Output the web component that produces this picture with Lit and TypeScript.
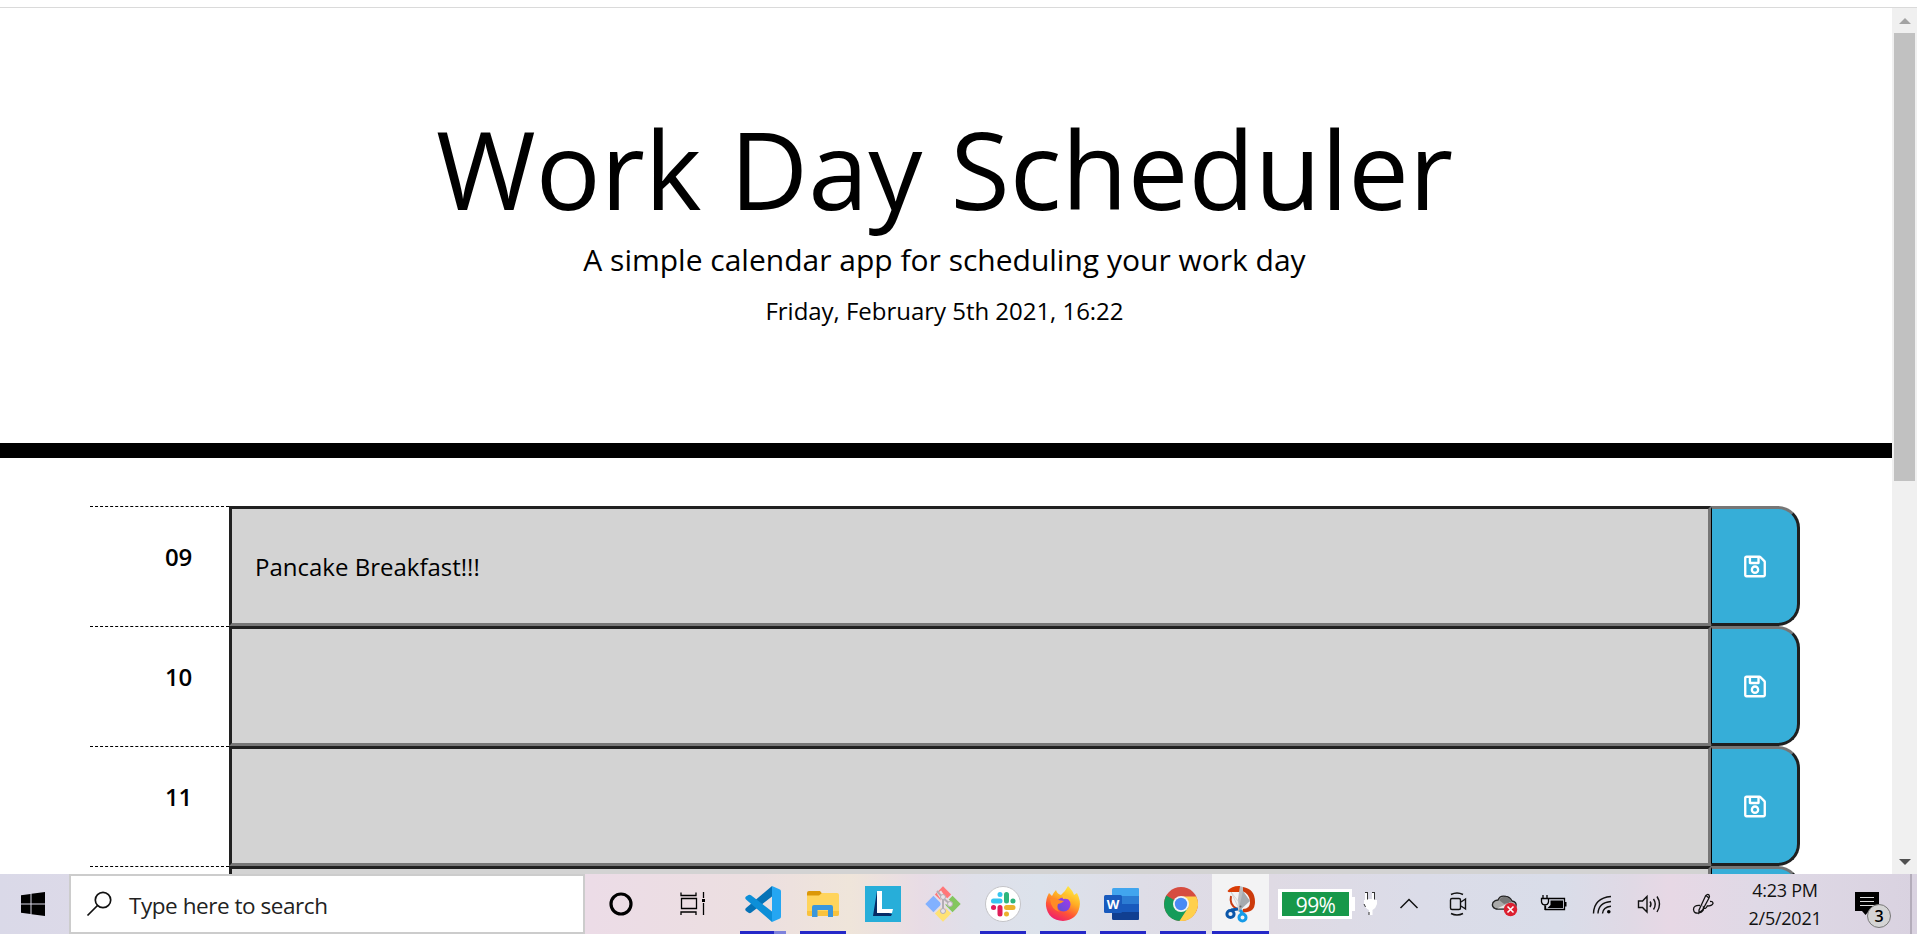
import { LitElement, html, svg, css } from "lit";
import { customElement, property } from "lit/decorators.js";

@customElement("time-block")
class TimeBlock extends LitElement {
  @property() hour = "";
  @property() text = "";
  static styles = css`
    :host { display: flex; height: 120px; box-sizing: border-box; }
    .hour { width: 139px; box-sizing: border-box; border-top: 1px dashed #000; padding: 32px 37px 0 0; text-align: right; font-size: 24px; line-height: 36px; font-weight: 600; letter-spacing: -0.2px; }
    .desc { flex: 1; box-sizing: border-box; background: #d3d3d3; border: 3px solid; border-color: #202020 #767676 #767676 #202020; display: flex; align-items: center; padding: 1px 0 0 23px; font-size: 24px; letter-spacing: 0; }
    .save { width: 89px; box-sizing: border-box; padding: 0; margin: 0; background: #36aed8; border-style: solid; border-width: 3px 3px 3px 1px; border-color: #767676 #202020 #202020 #000; border-radius: 0 22px 22px 0; display: flex; align-items: center; justify-content: center; }
    svg { width: 22px; height: 25px; display: block; }
  `;
  render() {
    return html`<div class="hour">${this.hour}</div>
      <div class="desc">${this.text}</div>
      <button class="save" aria-label="Save">
        <svg viewBox="0 0 448 512" fill="#fff"><path d="M433.941 129.941l-83.882-83.882A48 48 0 0 0 316.118 32H48C21.49 32 0 53.49 0 80v352c0 26.51 21.49 48 48 48h352c26.51 0 48-21.49 48-48V163.882a48 48 0 0 0-14.059-33.941zM272 80v80H144V80h128zm122 352H54a6 6 0 0 1-6-6V86a6 6 0 0 1 6-6h42v104c0 13.255 10.745 24 24 24h176c13.255 0 24-10.745 24-24V83.882l78.243 78.243a6 6 0 0 1 1.757 4.243V426a6 6 0 0 1-6 6zM224 232c-48.523 0-88 39.477-88 88s39.477 88 88 88 88-39.477 88-88-39.477-88-88-88zm0 128c-22.056 0-40-17.944-40-40s17.944-40 40-40 40 17.944 40 40-17.944 40-40 40z"/></svg>
      </button>`;
  }
}

/* Taskbar glyphs. Every one is drawn on a canvas 60px tall, the height of the bar. */
const start = svg`<path d="M21 21.2L30.500 20V29.500H21ZM31.500 19.800L45 18V29.500H31.500ZM21 30.500H30.500V40L21 38.800ZM31.500 30.500H45V42L31.500 40.200Z"/>`;
const lens = svg`<g fill="none" stroke="#111" stroke-width="1.700"><circle cx="32" cy="26" r="7.700"/><path d="M26.500 31.500L16.500 41.500"/></g>`;
const cortana = svg`<circle cx="36" cy="30" r="10" fill="none" stroke="#000" stroke-width="3.200"/>`;
const taskView = svg`<g fill="none" stroke="#000" stroke-width="1.300"><path d="M9 18.500V21.500H24V18.500M9 41V38H24V41M9.500 24.500H24.500V34.500H9.500ZM31.500 18V24M31.500 29V41"/></g><path d="M30 25h3v3h-3z"/>`;
const vscode = svg`<path d="M39 12V22.500L18 38.700Q17 39.500 15.500 38.800L13 37Q11.500 35.500 13 34Z" fill="#0672b6"/><path d="M13 25.500Q11.500 24 13 22.500L15.500 21Q17 20.500 18 21.300L39 37.500V48Z" fill="#0d8fd8"/><path d="M39 12L47 15.600Q48 16 48 17.500V42.500Q48 44 47 44.400L39 48Z" fill="#25a6f2"/>`;
const explorer = svg`<path d="M14 19Q14 17 16 17H27L29 19.500L27 24H14Z" fill="#dc9808"/><path d="M14 21.500H26L29 19H44Q46 19 46 21V40Q46 42 44 42H16Q14 42 14 40Z" fill="#ffd45c"/><path d="M14 37H46V40Q46 42 44 42H16Q14 42 14 40Z" fill="#f9c23d"/><path d="M19 43V33Q19 31 21 31H38Q40 31 40 33V43H35V36H24.500V43Z" fill="#3b97dc"/>`;
const letterL = svg`<path d="M12 12H48V48H12Z" fill="#27aed9"/><path d="M24 17L20 42H38L39 40L26 36Z" fill="#062b66"/><path d="M24 17H29V35H40L39 39H24Z" fill="#fff"/>`;
const git = svg`<g transform="translate(30 30) rotate(45)"><path d="M-12.500-12.500H-1V-1H-12.500Z" fill="#ff7779"/><path d="M1-12.500H12.500V-1H1Z" fill="#84c65f"/><path d="M-12.500 1H-1V12.500H-12.500Z" fill="#82b1ff"/><path d="M1 1H12.500V12.500H1Z" fill="#ffe274"/></g><path d="M26 18L30 24V37M30 24L38 31" fill="none" stroke="#eadfe6" stroke-width="5"/><path d="M24 17L30 24V37M30 24L37 30" fill="none" stroke="#b3aeb3" stroke-width="2"/><g fill="#e9e2e8" stroke="#b3aeb3"><circle cx="30" cy="23" r="2.500"/><circle cx="37" cy="30" r="2.500"/><circle cx="30" cy="37" r="2.500"/></g>`;
const slack = svg`<circle cx="30" cy="30" r="17.500" fill="#fff" stroke="#c4c4c8"/><g stroke-width="5" stroke-linecap="round"><path d="M27 20.500V20.400M20.500 27H27" stroke="#36c5f0"/><path d="M33.500 20.500V27M40 27H39.900" stroke="#2eb67d"/><path d="M33.500 40V39.900M33.500 33.500H40" stroke="#ecb22e"/><path d="M27 33.500V40M20.500 33.500H20.600" stroke="#e01e5a"/></g>`;
const firefox = svg`<defs><linearGradient id="ff" x1=".8" y1="0" x2=".3" y2="1"><stop offset="0" stop-color="#fff14a"/><stop offset=".4" stop-color="#ffad23"/><stop offset=".7" stop-color="#ff5436"/><stop offset="1" stop-color="#ed1b72"/></linearGradient><linearGradient id="fp" x1="1" y1="0" x2="0" y2="1"><stop offset="0" stop-color="#a638ed"/><stop offset="1" stop-color="#5b50d2"/></linearGradient></defs><path d="M35 12Q40 17 41 21L44 19Q48 27 46.500 33Q44 46 30 47Q15 46 13 32Q12.500 25 16 19L19 22Q21 18 23 16Q24 20 28 21Q32 18 35 12Z" fill="url(#ff)"/><circle cx="30.500" cy="30.500" r="7" fill="url(#fp)"/><path d="M17 25Q23 23 25.500 26L31 27Q28 30 25 30Q23 35 27 38Q18 36 17 25Z" fill="#ff8b26"/><path d="M29 21Q36 20 38 27Q35 24 30 25Z" fill="#ffbd35"/>`;
const word = svg`<path d="M20.500 14H45Q46 14 46 15V22.500H19V15.500Q19 14 20.500 14Z" fill="#41a5ee"/><path d="M19 22H46V30H19Z" fill="#2b7cd3"/><path d="M19 30H46V38H19Z" fill="#185abd"/><path d="M19 38H46V45Q46 46 45 46H20.500Q19 46 19 44.500Z" fill="#103f91"/><rect x="11" y="21" width="18" height="18" rx="1.500" fill="#185abd"/><text x="20" y="34.500" text-anchor="middle" font-size="13" font-weight="700" fill="#fff">W</text>`;
const chrome = svg`<circle cx="28" cy="30" r="17" fill="#d64c40"/><path d="M13.300 21.500A17 17 0 0 0 26.500 47L35.500 34.500L28 30Z" fill="#159c5a"/><path d="M28 22.500H43.200A17 17 0 0 1 26.500 47L35.500 33Z" fill="#ffd04c"/><circle cx="28" cy="30" r="8" fill="#f3f3f3"/><circle cx="28" cy="30" r="6.200" fill="#4a8af4"/>`;
const snip = svg`<path d="M15.500 17Q20 11.500 28 12V18H18Q16 18.500 15.500 17Z" fill="#d93c05"/><path d="M31 13Q43 15 43 28Q43 39 30 38.500L31 35Q38 35 38 28Q38 20 30 17Z" fill="#cc3a0b"/><path d="M19 22Q17 31 25 35" fill="none" stroke="#c83a10" stroke-width="2"/><path d="M19 18L30 32L28 37Z" fill="#eee" stroke="#bbb" stroke-width=".5"/><path d="M28 12L31 13V33L27 37L26 25Z" fill="#b9bcc0"/><path d="M31 17L38 27L26 38Z" fill="#a5aaae"/><circle cx="28.500" cy="32.500" r="1" fill="#666"/><g fill="none" stroke-width="3"><circle cx="18.500" cy="40" r="3.600" stroke="#0a56a9"/><path d="M19 36L26 35" stroke="#0a56a9"/><circle cx="30.500" cy="43.500" r="3.500" stroke="#159be8"/><path d="M31 40L28 36" stroke="#159be8"/></g>`;
const plug = svg`<path d="M10 19H13V25H17V19H20V26H22V30Q21 34 17.500 36V41H14V36Q10 34 9 30V26H10Z" fill="#fff"/><path d="M12.500 19V25.500M19.500 19V25.500M9 30L10.500 33M14 38V41M10 18.500H13M17 18.500H20" stroke="#333" fill="none"/>`;
const chevron = svg`<path d="M10.500 34L19 25.500L27.500 34" fill="none" stroke="#111" stroke-width="1.500"/>`;
const camera = svg`<g fill="none" stroke="#111" stroke-width="1.400"><rect x="10.500" y="24.500" width="10" height="11" rx="1.500"/><path d="M21 28L25.500 25V35L21 32M11 20.500Q17 17.500 23 20.500M11 39.500Q17 42.500 23 39.500"/></g>`;
const cloud = svg`<path d="M11 35Q6 33 8 28.500Q10 26 13 26Q15 21 21 22.500Q25 23 27 27Q32 28 31 32Q30 35 27 35Z" fill="#aaa" stroke="#222" stroke-width="1.300"/><path d="M14 26Q17 22 22 23Q26 25 27 28L19 30Z" fill="#777"/><path d="M12 34.500L25 28.500L30 34Z" fill="#e6e6e6"/><circle cx="25.500" cy="35.500" r="6.700" fill="#dc2030"/><path d="M22.500 32.500L28.500 38.500M28.500 32.500L22.500 38.500" stroke="#fff" stroke-width="1.600"/>`;
const battery = svg`<path d="M16 24.500H31.500V35.500H12.500V32" fill="none" stroke="#000" stroke-width="1.300"/><path d="M17.500 26.500H30V34H14.500L17.500 31ZM32 28H33.500V32.500H32Z"/><path d="M10 21V24.500M14 21V24.500M8.500 24.500H15.500V28Q15 31 12 31Q9 31 8.500 28ZM12 31V36" fill="none" stroke="#000" stroke-width="1.300"/>`;
const wifi = svg`<g fill="none" stroke="#111" stroke-width="1.400"><path d="M8.500 39.500Q9 24 26 22.500M13 39.500Q13.500 28.500 26 27.500M17.500 39.500Q18 33 26 32.200"/></g><circle cx="23.800" cy="37.800" r="1.800"/>`;
const speaker = svg`<g fill="none" stroke="#111" stroke-width="1.400"><path d="M8.500 27H12.500L17 22.500V38L12.500 33.500H8.500ZM20 27.500Q22 30 20 33M23.500 25Q27 30 23.500 35.500M27 22.500Q32 30 27 38"/></g>`;
const pen = svg`<g fill="none" stroke="#111" stroke-width="1.300"><path d="M14 36L20.500 22Q22.500 19.500 24 21Q25 22.500 24 24L17.500 36L14 39ZM15 31.500Q8.500 31 8.500 35.500Q9 40 14 39Q19 37.500 18.500 33.500Q20.500 36 22.500 31.500M25 27.500Q28 27 28 29.500Q27 32 22 32M21.500 22L24 24"/></g>`;
const notes = svg`<path d="M10 18H34V37H24L20.500 41L17 37H10Z"/><path d="M15 23.500H29M15 27.500H29M15 31.500H29" stroke="#ddd" stroke-width="1"/>`;

@customElement("task-bar")
class TaskBar extends LitElement {
  static styles = css`
    :host { display: flex; height: 60px; overflow: hidden; background: linear-gradient(90deg, #dad9e8 0, #e2dbe8 300px, #ecdce7 590px, #ecdfe0 760px, #efe5da 850px, #e8dce5 920px, #dfe0ea 975px, #dce2eb 1040px, #dedde7 1140px, #dfdae4 1270px, #dbdce8 1420px, #d9dde9 1560px, #e0d9e5 1630px, #e7d8e5 1670px, #dfd9e6 1760px, #d9d2e0 1917px); }
    svg { display: block; flex: none; }
    .search { display: flex; width: 516px; box-sizing: border-box; border: 2px solid #ccc; background: #fff; align-items: center; font: 22.5px/30px "Open Sans", sans-serif; color: #222; }
    .search svg { margin: -2px 0; }
    .search span { letter-spacing: -0.45px; margin: 4px 0 0 2px; white-space: nowrap; }
    .app { display: flex; flex-direction: column; position: relative; }
    .mark { height: 3px; background: #2528c8; margin: -3px auto 0 7px; width: 46px; position: relative; flex: none; }
    .part { background: linear-gradient(90deg, #2528c8 34px, #7e82dc 34px); }
    .active { background: #f3f3f4; }
    .active .mark { width: 57px; margin-left: 0; }
    .gauge { width: 74px; height: 30px; box-sizing: border-box; margin: 15px 0 0 9px; border: 3px solid #fff; border-left-width: 4px; background: #17984a; color: #fff; text-align: center; font: 21px/27px "Open Sans", sans-serif; letter-spacing: -0.7px; }
    .tip { width: 3px; height: 14px; background: #fff; margin-top: 23px; }
    .clock { width: 102px; text-align: center; font: 18px/28px "Open Sans", sans-serif; color: #111; padding: 2px 9px 0 0; letter-spacing: -0.25px; white-space: nowrap; }
    .note { position: relative; width: 65px; }
    .badge { position: absolute; left: 22px; top: 29.500px; width: 24px; height: 24px; box-sizing: border-box; border: 1px solid #777; border-radius: 50%; background: #d4d4d4; font: 600 16px/22px "Open Sans", sans-serif; text-align: center; }
    .edge { width: 1.500px; background: #b3acba; }
  `;
  glyph(w: number, body: unknown) {
    return html`<svg width=${w} height="60" viewBox="0 0 ${w} 60" font-family="Open Sans, sans-serif">${body}</svg>`;
  }
  app(w: number, body: unknown, mark = "mark") {
    return html`<div class="app">${this.glyph(w, body)}${mark ? html`<div class=${mark}></div>` : ""}</div>`;
  }
  render() {
    return html`${this.glyph(69, start)}
      <div class="search">${this.glyph(56, lens)}<span>Type here to search</span></div>
      ${this.glyph(87, cortana)}${this.glyph(61, taskView)}
      ${this.app(60, vscode, "mark part")}${this.app(60, explorer)}${this.app(60, letterL, "")}${this.app(60, git, "")}
      ${this.app(60, slack)}${this.app(60, firefox)}${this.app(60, word)}${this.app(59, chrome)}
      <div class="app active">${this.glyph(57, snip)}<div class="mark"></div></div>
      <div class="gauge">99%</div><div class="tip"></div>
      ${this.glyph(35, plug)}${this.glyph(50, chevron)}${this.glyph(45, camera)}${this.glyph(48, cloud)}
      ${this.glyph(52, battery)}${this.glyph(45, wifi)}${this.glyph(55, speaker)}${this.glyph(49, pen)}
      <div class="clock"><div>4:23 PM</div><div>2/5/2021</div></div>
      <div class="note">${this.glyph(65, notes)}<div class="badge">3</div></div>
      <div class="edge"></div>`;
  }
}

@customElement("app-root")
class AppRoot extends LitElement {
  static styles = css`
    :host { display: flex; flex-direction: column; width: 1917px; height: 934px; overflow: hidden; background: #fff; color: #000; font-family: "Open Sans", sans-serif; }
    .top { height: 7px; border-bottom: 1px solid #dadada; flex: none; }
    .view { flex: 1; min-height: 0; display: flex; overflow: hidden; }
    .page { width: 1892px; height: 866px; overflow: hidden; }
    header { height: 450px; box-sizing: border-box; border-bottom: 15px solid #000; padding: 96px 3px 0 0; text-align: center; white-space: nowrap; }
    h1 { margin: 0; font-weight: 400; font-size: 108px; line-height: 130px; letter-spacing: 0.05px; }
    .lead { margin: 0; font-size: 30px; line-height: 45px; padding-top: 3px; }
    .date { margin: 0; font-size: 24px; line-height: 36px; padding-top: 11px; letter-spacing: -0.03px; }
    .rows { padding: 48px 92px 0 90px; }
    .scroll { width: 25px; background: #f0f0f0; display: flex; flex-direction: column; align-items: center; }
    .up { border: 6px solid transparent; border-top: 0; border-bottom-color: #a3a3a3; margin: 10px 0 9px; }
    .thumb { width: 21px; height: 448px; background: #c1c1c1; }
    .down { border: 6px solid transparent; border-bottom: 0; border-top-color: #505050; margin: auto 0 9px; }
  `;
  render() {
    return html`<div class="top"></div>
      <div class="view">
        <div class="page">
          <header>
            <h1>Work Day Scheduler</h1>
            <p class="lead">A simple calendar app for scheduling your work day</p>
            <p class="date">Friday, February 5th 2021, 16:22</p>
          </header>
          <div class="rows">
            <time-block hour="09" text="Pancake Breakfast!!!"></time-block>
            <time-block hour="10"></time-block>
            <time-block hour="11"></time-block>
            <time-block></time-block>
          </div>
        </div>
        <div class="scroll"><div class="up"></div><div class="thumb"></div><div class="down"></div></div>
      </div>
      <task-bar></task-bar>`;
  }
}
